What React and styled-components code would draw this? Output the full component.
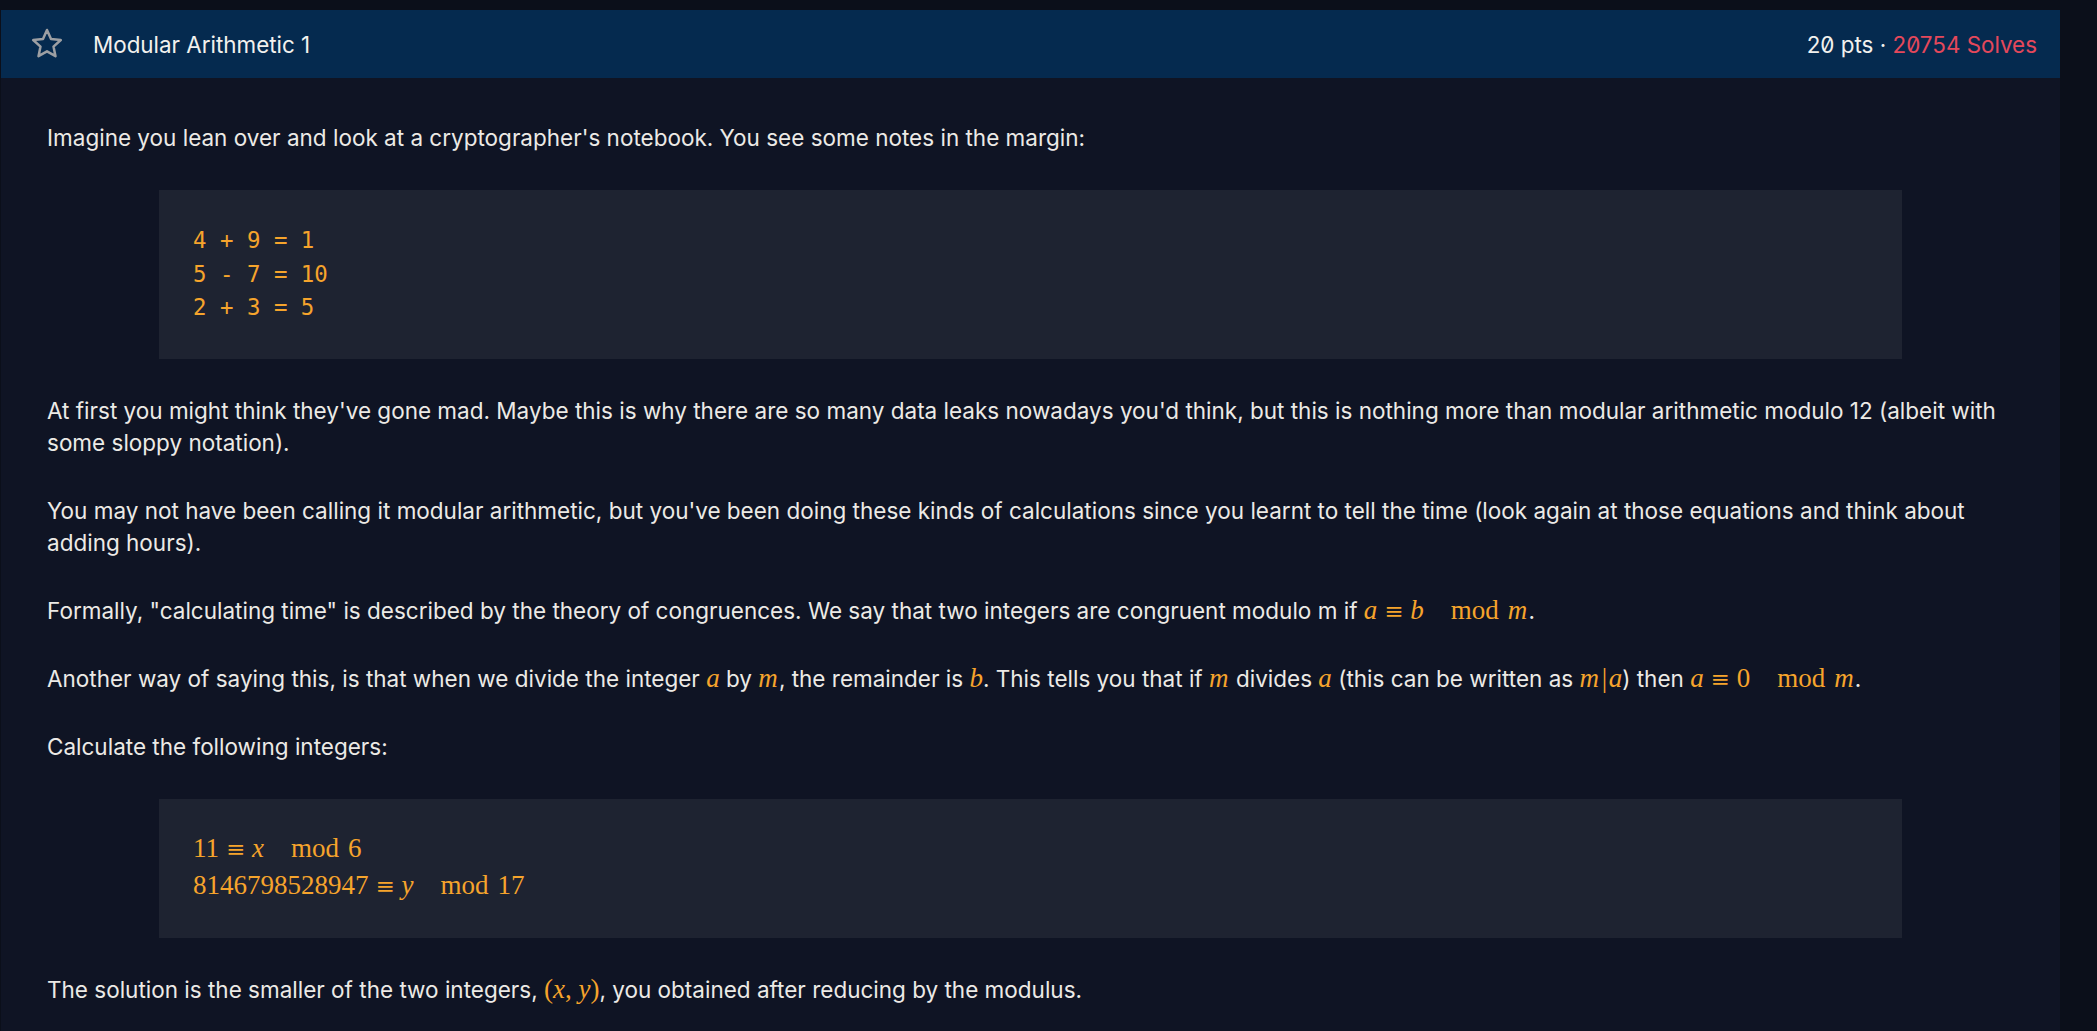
import React from "react";
import styled, { createGlobalStyle } from "styled-components";

const Global = createGlobalStyle`
  html, body { margin: 0; padding: 0; background: #0b0f1a; }
  body { font-family: Inter, "Noto Sans", sans-serif; }
`;

const Page = styled.div`
  display: flex;
  padding: 10px 37px 0 1px;
  min-height: 1021px;
  background: #0b0f1a;
`;

const Panel = styled.div`
  flex: 1;
  display: flex;
  flex-direction: column;
  background: #0f1424;
`;

const Header = styled.div`
  height: 68px;
  display: flex;
  align-items: center;
  padding: 0 23px 0 29px;
  background: #052a4f;
  color: #f2f1ee;
  font-size: 22.4px;
`;

const StarIcon = styled.svg`
  width: 34px;
  height: 34px;
  flex: none;
`;

const Title = styled.div`
  margin-left: 29px;
  flex: 1;
`;

const Stats = styled.div`
  font-feature-settings: "zero" 1;
  color: #f2f1ee;
`;

const Solves = styled.span`
  color: #e5485b;
`;

const Body = styled.div`
  display: flex;
  flex-direction: column;
  gap: 36px;
  padding: 44px 47px 40px 46px;
  color: #eceae6;
`;

const P = styled.p`
  margin: 0;
  font-size: 22.5px;
  line-height: 32px;
`;

const Pre = styled.pre`
  margin: 0 111px 0 112px;
  background: #1e2331;
  padding: ${(p) => p.$pad || "34px 34px 34px 34px"};
  font-family: "DejaVu Sans Mono", "Liberation Mono", monospace;
  font-size: 22.4px;
  line-height: 33.5px;
  color: #f6a42c;
  white-space: pre;
`;

const MathLine = styled.div`
  font-family: "Liberation Serif", "DejaVu Serif", serif;
  font-size: 27px;
  line-height: 36px;
  color: #f6a42c;
`;

const M = styled.span`
  font-family: "Liberation Serif", "DejaVu Serif", serif;
  font-size: 27px;
  line-height: 0;
  color: #f6a42c;
  white-space: nowrap;
`;

const V = styled.i`
  font-style: italic;
  margin-right: ${(p) => (p.$wide ? "0.04em" : "0")};
`;

const Rel = styled.span`
  font-family: "DejaVu Serif", serif;
  font-size: 0.85em;
  margin: 0 0.3em;
`;

const Mod = styled.span`
  margin: 0 0.333em 0 1em;
`;

const Bar = styled.span`
  margin: 0 0.06em;
`;

const Star = () => (
  <StarIcon viewBox="0 0 34 34">
    <polygon
      points="17,3 21,12 30.8,13 23.5,19.6 25.5,29.2 17,24.3 8.5,29.2 10.5,19.6 3.2,13 13,12"
      fill="none"
      stroke="#9d9fa3"
      strokeWidth="2.5"
      strokeLinejoin="round"
    />
  </StarIcon>
);

export default function App() {
  return (
    <>
      <Global />
      <Page>
        <Panel>
          <Header>
            <Star />
            <Title>Modular Arithmetic 1</Title>
            <Stats>
              20 pts · <Solves>20754 Solves</Solves>
            </Stats>
          </Header>
          <Body>
            <P>
              Imagine you lean over and look at a cryptographer's notebook. You see some notes in the margin:
            </P>
            <Pre>{`4 + 9 = 1
5 - 7 = 10
2 + 3 = 5`}</Pre>
            <P>
              At first you might think they've gone mad. Maybe this is why there are so many data leaks nowadays
              you'd think, but this is nothing more than modular arithmetic modulo 12 (albeit with some sloppy
              notation).
            </P>
            <P>
              You may not have been calling it modular arithmetic, but you've been doing these kinds of
              calculations since you learnt to tell the time (look again at those equations and think about
              adding hours).
            </P>
            <P>
              Formally, "calculating time" is described by the theory of congruences. We say that two integers
              are congruent modulo m if{" "}
              <M>
                <V>a</V>
                <Rel>≡</Rel>
                <V>b</V>
                <Mod>mod</Mod>
                <V $wide>m</V>
              </M>
              .
            </P>
            <P>
              Another way of saying this, is that when we divide the integer{" "}
              <M>
                <V>a</V>
              </M>{" "}
              by{" "}
              <M>
                <V $wide>m</V>
              </M>
              , the remainder is{" "}
              <M>
                <V>b</V>
              </M>
              . This tells you that if{" "}
              <M>
                <V $wide>m</V>
              </M>{" "}
              divides{" "}
              <M>
                <V>a</V>
              </M>{" "}
              (this can be written as{" "}
              <M>
                <V $wide>m</V>
                <Bar>|</Bar>
                <V>a</V>
              </M>
              ) then{" "}
              <M>
                <V>a</V>
                <Rel>≡</Rel>0<Mod>mod</Mod>
                <V $wide>m</V>
              </M>
              .
            </P>
            <P>Calculate the following integers:</P>
            <Pre $pad="31px 34px 34px 34px">
              <MathLine>
                11<Rel>≡</Rel>
                <V>x</V>
                <Mod>mod</Mod>6
              </MathLine>
              <MathLine>
                8146798528947<Rel>≡</Rel>
                <V>y</V>
                <Mod>mod</Mod>17
              </MathLine>
            </Pre>
            <P>
              The solution is the smaller of the two integers,{" "}
              <M>
                (<V>x</V>, <V>y</V>)
              </M>
              , you obtained after reducing by the modulus.
            </P>
          </Body>
        </Panel>
      </Page>
    </>
  );
}
